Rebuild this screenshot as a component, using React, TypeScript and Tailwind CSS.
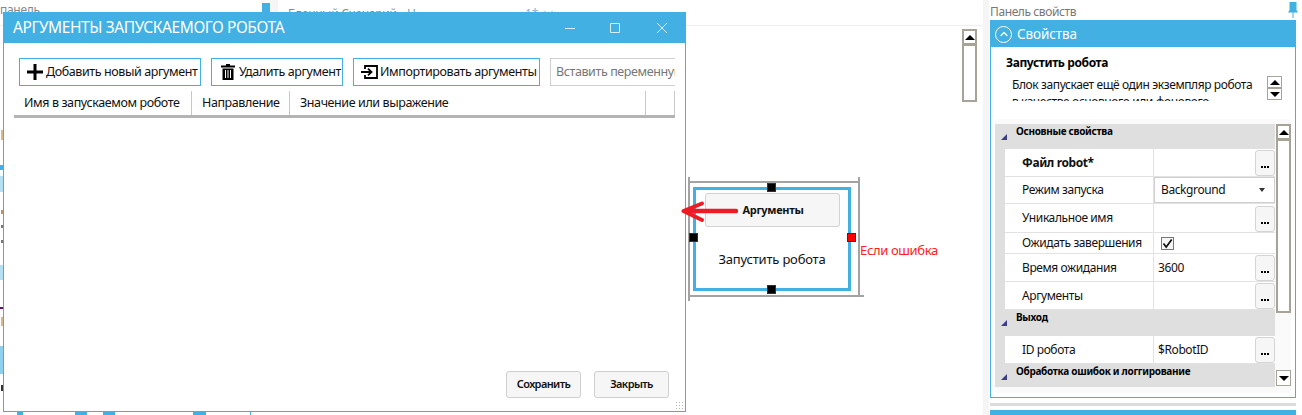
import { ChevronUp } from 'lucide-react';

const font = "font-['Noto_Sans','Open_Sans',sans-serif]";

function ScrollUp() {
  return (
    <div className="flex h-[12px] w-[15px] items-center justify-center border border-[#a7a396] bg-white">
      <div className="h-0 w-0 border-x-[5px] border-b-[5px] border-x-transparent border-b-black" />
    </div>
  );
}

function ScrollDown({ className = 'h-[12px]' }: { className?: string }) {
  return (
    <div className={`flex w-[15px] items-center justify-center border border-[#a7a396] bg-white ${className}`}>
      <div className="h-0 w-0 border-x-[5px] border-t-[5px] border-x-transparent border-t-black" />
    </div>
  );
}

function DotsButton() {
  return (
    <div className="mt-[1px] flex h-[26px] w-[20px] shrink-0 items-end justify-center rounded-[3px] border border-[#d4d4d4] bg-[#f6f6f6] pb-[7px]">
      <div className="flex gap-[1px]">
        <span className="h-[2px] w-[2px] bg-black" />
        <span className="h-[2px] w-[2px] bg-black" />
        <span className="h-[2px] w-[2px] bg-black" />
      </div>
    </div>
  );
}

function Row({ label, h, bold, value }: { label: string; h: string; bold?: boolean; value?: string }) {
  return (
    <div className={`flex items-stretch border-b border-[#e2e2e2] bg-white ${h}`}>
      <div className={`flex w-[149px] items-center border-r border-[#e2e2e2] pl-[17px] text-[12px] tracking-[-0.4px] text-[#111] ${bold ? 'font-bold' : ''}`}>
        {label}
      </div>
      <div className="flex flex-1 items-center justify-between">
        <span className="pl-[4px] text-[12px] tracking-[-0.4px] text-[#111]">{value}</span>
        <DotsButton />
      </div>
    </div>
  );
}

function Category({ label, h }: { label: string; h: string }) {
  return (
    <div className={`relative bg-[#dfdfdf] pl-[21px] text-[10px] font-bold leading-[15px] tracking-[-0.3px] text-black ${h}`}>
      <div className="absolute left-[6px] top-[10px] h-0 w-0 border-b-[6px] border-l-[6px] border-b-[#3c3c8c] border-l-transparent" />
      {label}
    </div>
  );
}

function ToolButton({ className, icon, label }: { className: string; icon: React.ReactNode; label: string }) {
  return (
    <div className={`flex h-[28px] items-center whitespace-nowrap border border-[#42b0e2] text-[12.5px] tracking-[-0.4px] text-[#111] ${className}`}>
      {icon}
      {label}
    </div>
  );
}

function Dialog() {
  return (
    <div className="absolute left-[3px] top-[12px] flex h-[400px] w-[683px] flex-col border border-t-0 border-[#42b0e2] bg-white">
      <div className="flex h-[31px] shrink-0 items-center bg-[#42b0e2] pl-[9px] text-white">
        <span className="text-[15.5px] leading-none tracking-[-0.4px]">АРГУМЕНТЫ ЗАПУСКАЕМОГО РОБОТА</span>
        <svg className="ml-auto mr-[18px]" width="102" height="12" viewBox="0 0 102 12" fill="none" stroke="#d5eefa" strokeWidth="1">
          <path d="M0 6.5H10" />
          <path d="M45.5 1.5h9v9h-9z" />
          <path d="M92 1 102 11M102 1 92 11" />
        </svg>
      </div>
      <div className="mt-[15px] flex gap-[10px] pl-[15px]">
        <ToolButton
          className="w-[182px] gap-[3px] pl-[7px]"
          icon={
            <svg width="16" height="16" viewBox="0 0 16 16" fill="black">
              <path d="M6.5 0h3v6.5H16v3H9.5V16h-3V9.500H0v-3h6.500z" />
            </svg>
          }
          label="Добавить новый аргумент"
        />
        <ToolButton
          className="w-[132px] gap-[4px] pl-[9px]"
          icon={
            <svg width="14" height="16" viewBox="0 0 14 16" fill="black">
              <path d="M5 0h4v1.500h5V3.500H0V1.500h5zM1.500 4.500h11V16h-11zM4 6v8h1V6zM6.500 6v8h1V6zM9 6v8h1V6z" fillRule="evenodd" />
            </svg>
          }
          label="Удалить аргумент"
        />
        <ToolButton
          className="w-[187px] gap-[2px] pl-[7px]"
          icon={
            <svg width="17" height="14" viewBox="0 0 17 14" fill="none" stroke="black" strokeWidth="1.8">
              <path d="M4 4V1h12v12H4v-3" />
              <path d="M0 7h10M7 3.700 10.500 7 7 10.300" />
            </svg>
          }
          label="Импортировать аргументы"
        />
        <div className="flex h-[28px] w-[125px] items-center overflow-hidden whitespace-nowrap border border-r-0 border-[#cfcfcf] pl-[5px] text-[12.5px] tracking-[-0.4px] text-[#777]">
          Вставить переменную
        </div>
      </div>
      <div className="ml-[10px] mt-[5px] flex h-[27px] w-[661px] shrink-0 items-center whitespace-nowrap border-b-[3px] border-[#b4b4b4] text-[12.5px] tracking-[-0.4px] text-[#111]">
        <div className="flex h-full w-[178px] items-center border-r border-[#c8c8c8] pl-[10px]">Имя в запускаемом роботе</div>
        <div className="flex h-full w-[98px] items-center border-r border-[#c8c8c8] pl-[10px]">Направление</div>
        <div className="flex h-full w-[356px] items-center border-r border-[#c8c8c8] pl-[10px]">Значение или выражение</div>
        <div className="h-full w-[29px] border-r border-[#c8c8c8]" />
      </div>
      <div className="mt-auto flex justify-end gap-[13px] pb-[13px] pr-[16px] text-[11px] font-semibold tracking-[-0.6px] text-[#111]">
        <div className="flex h-[27px] w-[75px] items-center justify-center rounded-[3px] border border-[#cfcfcf] bg-[#f6f6f6]">Сохранить</div>
        <div className="flex h-[27px] w-[75px] items-center justify-center rounded-[3px] border border-[#cfcfcf] bg-[#f6f6f6]">Закрыть</div>
      </div>
      <div className="absolute bottom-[1px] right-[1px] h-[9px] w-[9px] bg-[radial-gradient(#b5b5b5_1px,transparent_1px)] bg-[length:3px_3px]" />
    </div>
  );
}

function Handle({ className }: { className: string }) {
  return <div className={`absolute h-[9px] w-[9px] border border-[#2a2a6a] ${className}`} />;
}

function BlockNode() {
  return (
    <>
      <div className="absolute left-[688px] top-[181px] h-[116px] w-[172px] border-2 border-[#a3a3a3]">
        <div className="absolute left-[-2px] top-[-6px] h-[5px] w-[2px] bg-[#a3a3a3]" />
        <div className="absolute right-[-2px] top-[-6px] h-[5px] w-[2px] bg-[#a3a3a3]" />
        <div className="absolute bottom-[-6px] left-[-2px] h-[5px] w-[2px] bg-[#a3a3a3]" />
        <div className="absolute bottom-[-2px] right-[-6px] h-[2px] w-[5px] bg-[#a3a3a3]" />
        <div className="absolute left-[3px] top-[4px] flex h-[104px] w-[158px] flex-col items-center border-[3px] border-[#42b0e2] bg-white">
          <div className="mt-[3px] flex h-[34px] w-[135px] items-center justify-center rounded-[3px] border border-[#d2d2d2] bg-[#f6f6f6] pl-[2px] text-[11px] font-bold tracking-[-0.3px] text-[#111]">
            Аргументы
          </div>
          <div className="mt-[23px] text-[13px] tracking-[-0.2px] text-[#111]">Запустить робота</div>
        </div>
        <Handle className="left-[77px] top-0 bg-black" />
        <Handle className="left-[-1px] top-[50px] bg-black" />
        <Handle className="left-[157px] top-[50px] bg-[#ff0000]" />
        <Handle className="left-[77px] top-[102px] bg-black" />
      </div>
      <span className="absolute left-[860px] top-[241px] text-[13px] tracking-[-0.35px] text-[#ff2020]">Если ошибка</span>
      <svg className="absolute left-[680px] top-[200px]" width="58" height="24" viewBox="0 0 58 24" fill="none" stroke="#ed1c24" strokeLinecap="round">
        <path d="M5 11H56" strokeWidth="4.5" />
        <path d="M3.500 11 22 3.500M3.500 11 22 20" strokeWidth="4" />
      </svg>
    </>
  );
}

function Canvas() {
  return (
    <div className="relative w-[983px] shrink-0 overflow-hidden bg-white">
      <div className="flex h-[26px] items-start border-b border-[#efefef]">
        <span className="mt-[1px] w-[262px] text-[12px] tracking-[-0.3px] text-[#888]">панель</span>
        <div className="mt-[3px] h-[10px] w-[8px] bg-[#42b0e2]" />
        <div className="h-[12px] w-[8px] bg-[#f5f5f5]" />
        <span className="ml-[10px] mt-[5px] w-[119px] whitespace-nowrap text-[12px] tracking-[-0.3px] text-[#888]">Блочный Сценарий</span>
        <span className="mt-[5px] w-[118px] text-[12px] text-[#7f9fb8]">Н</span>
        <span className="mt-[5px] text-[12px] text-[#7fb8dc]">1* ++</span>
      </div>
      <div className="absolute left-[962px] top-[29px] flex h-[73px] w-[15px] flex-col border-2 border-[#a7a396]">
        <div className="flex h-[15px] items-center justify-center border-b-[3px] border-[#a7a396]">
          <div className="h-0 w-0 border-x-[5px] border-b-[5px] border-x-transparent border-b-black" />
        </div>
      </div>
      {/* обрезанный край схемы за окном */}
      <div className="absolute left-[1px] top-[130px] h-[10px] w-[2px] bg-[#d8b98a]" />
      <div className="absolute left-0 top-[165px] h-[5px] w-[3px] bg-[#42b0e2]" />
      <div className="absolute left-0 top-[176px] h-[16px] w-[3px] bg-[#b5e0f4]" />
      <div className="absolute left-[1px] top-[210px] h-[4px] w-[2px] bg-[#c09070]" />
      <div className="absolute left-[1px] top-[225px] h-[3px] w-[2px] bg-[#777]" />
      <div className="absolute left-[1px] top-[240px] h-[3px] w-[2px] bg-[#777]" />
      <div className="absolute left-0 top-[265px] h-[15px] w-[3px] bg-[#b5e0f4]" />
      <div className="absolute left-0 top-[307px] h-[2px] w-[3px] bg-[#5a1070]" />
      <div className="absolute left-[1px] top-[317px] h-[9px] w-[2px] bg-[#d8b98a]" />
      <div className="absolute left-0 top-[346px] h-[28px] w-[3px] bg-[#8fd0ee]" />
      <div className="absolute left-[1px] top-[385px] h-[6px] w-[2px] bg-[#333]" />
      <div className="absolute bottom-0 left-[17px] h-[3px] w-[6px] bg-[#42b0e2]" />
      <div className="absolute bottom-0 left-[75px] h-[3px] w-[12px] bg-[#42b0e2]" />
      <div className="absolute bottom-0 left-[103px] h-[3px] w-[12px] bg-[#42b0e2]" />
      <div className="absolute bottom-0 left-[193px] h-[3px] w-[13px] bg-[#42b0e2]" />
      <div className="absolute bottom-0 left-[250px] h-[3px] w-[1px] bg-[#42b0e2]" />
      <Dialog />
      <BlockNode />
    </div>
  );
}

function PropertiesPanel() {
  return (
    <div className="flex flex-1 flex-col bg-white">
      <div className="flex flex-1 flex-col border-l-[6px] border-[#f5f5f5] pl-[1px] pr-[6px]">
        <div className="flex h-[20px] items-center justify-between pt-[4px] text-[12px] tracking-[-0.4px] text-[#777]">
          Панель свойств
          <svg className="mr-[-2px] mt-[-5px]" width="10" height="16" viewBox="0 0 10 16" fill="#42b0e2">
            <path d="M1.500 0h7v8l1.500 2.500H5.500V16h-1v-5.500H0L1.500 8z" />
          </svg>
        </div>
        <div className="flex h-[378px] flex-col border border-[#42b0e2]">
          <div className="flex h-[26px] shrink-0 items-center gap-[5px] bg-[#42b0e2] pl-[4px] text-[13.5px] tracking-[-0.1px] text-white">
            <div className="flex h-[17px] w-[17px] items-center justify-center rounded-full border border-white">
              <ChevronUp size={12} strokeWidth={2.5} />
            </div>
            Свойства
          </div>
          <div className="relative h-[72px] shrink-0 pl-[15px] pt-[7px]">
            <div className="text-[12px] font-bold leading-[18px] tracking-[-0.4px] text-black">Запустить робота</div>
            <div className="ml-[6px] mt-[4px] h-[25px] w-[244px] overflow-hidden text-[12px] leading-[17px] tracking-[-0.4px] text-[#111]">
              Блок запускает ещё один экземпляр робота в качестве основного или фонового
            </div>
            <div className="absolute left-[276px] top-[29px] flex flex-col">
              <ScrollUp />
              <ScrollDown />
            </div>
          </div>
          <div className="ml-[4px] h-[274px] w-[296px] bg-[#fafafa] pt-[5px]">
            <div className="flex">
              <div className="h-[263px] w-[280px] overflow-hidden bg-[#dfdfdf]">
                <Category label="Основные свойства" h="h-[25px]" />
                <div className="ml-[10px]">
                  <Row label="Файл robot*" h="h-[28px]" bold />
                  <div className="flex h-[27px] items-stretch border-b border-[#e2e2e2] bg-white">
                    <div className="flex w-[149px] items-center border-r border-[#e2e2e2] pl-[17px] text-[12px] tracking-[-0.4px] text-[#111]">Режим запуска</div>
                    <div className="flex flex-1 items-center justify-between border border-[#cfcfcf] pl-[6px] pr-[9px] text-[12px] tracking-[-0.4px] text-[#111]">
                      Background
                      <div className="h-0 w-0 border-x-[3.5px] border-t-[4px] border-x-transparent border-t-[#333]" />
                    </div>
                  </div>
                  <Row label="Уникальное имя" h="h-[29px]" />
                  <div className="flex h-[21px] items-stretch border-b border-[#e2e2e2] bg-white">
                    <div className="flex w-[149px] items-center border-r border-[#e2e2e2] pl-[17px] text-[12px] tracking-[-0.4px] text-[#111]">Ожидать завершения</div>
                    <div className="flex flex-1 items-center pl-[7px]">
                      <div className="flex h-[13px] w-[13px] items-center justify-center border border-[#777] bg-[#f5f5f5]">
                        <svg width="11" height="11" viewBox="0 0 11 11" fill="none" stroke="#111" strokeWidth="1.7">
                          <path d="M1.500 5.500 4.200 9 9.700 1.500" />
                        </svg>
                      </div>
                    </div>
                  </div>
                  <Row label="Время ожидания" h="h-[28px]" value="3600" />
                  <Row label="Аргументы" h="h-[28px]" />
                </div>
                <Category label="Выход" h="h-[26px]" />
                <div className="ml-[10px]">
                  <Row label="ID робота" h="h-[28px]" value="$RobotID" />
                </div>
                <Category label="Обработка ошибок и логгирование" h="h-[24px]" />
              </div>
              <div className="ml-[1px] flex h-[263px] w-[15px] flex-col justify-between">
                <div className="flex h-[189px] flex-col border-2 border-[#a7a396] bg-white">
                  <div className="flex h-[15px] shrink-0 items-center justify-center border-b-[3px] border-[#a7a396]">
                    <div className="h-0 w-0 border-x-[5px] border-b-[5px] border-x-transparent border-b-black" />
                  </div>
                </div>
                <ScrollDown className="mb-[1px] h-[16px]" />
              </div>
            </div>
          </div>
        </div>
        <div className="mt-[5px] h-[3px] bg-[#dcdcdc]" />
        <div className="mt-[4px] h-[5px] bg-[#42b0e2]" />
      </div>
    </div>
  );
}

export default function App() {
  return (
    <div className={`flex h-[415px] w-[1302px] overflow-hidden bg-white ${font}`}>
      <Canvas />
      <PropertiesPanel />
    </div>
  );
}
